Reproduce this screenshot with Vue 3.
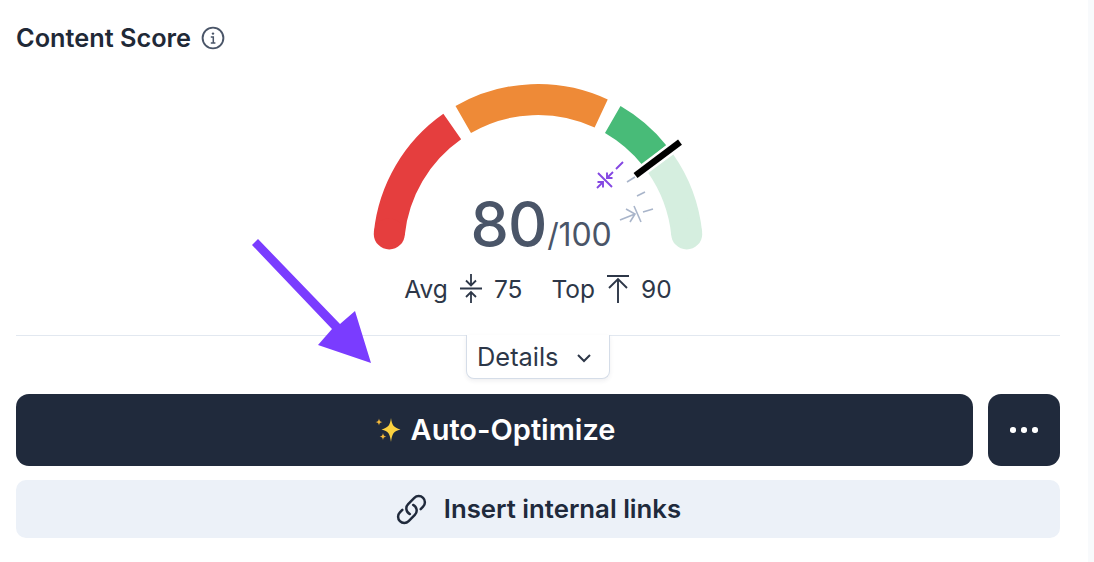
<script setup>
const cx = 538
const cy = 249
const r = 149.5
function point(d) {
  const t = (d * Math.PI) / 180
  return { x: +(cx + r * Math.sin(t)).toFixed(2), y: +(cy - r * Math.cos(t)).toFixed(2) }
}
function arc(a, b) {
  const p = point(a)
  const q = point(b)
  return `M${p.x} ${p.y} A${r} ${r} 0 0 1 ${q.x} ${q.y}`
}
const segments = [
  { d: arc(-84.2, -35), color: '#e53e3e' },
  { d: arc(-30, 25), color: '#ee8a37' },
  { d: arc(30, 51), color: '#48bb78' },
  { d: arc(55, 84.2), color: '#d5eedf' }
]
const capLeft = point(-84.2)
const capRight = point(84.2)
</script>

<template>
  <div class="page">
    <main class="panel">
      <h2 class="title">
        Content Score
        <svg class="info" viewBox="0 0 24 24" aria-hidden="true">
          <circle cx="12" cy="12" r="10.4" fill="none" stroke="#4a5568" stroke-width="1.9" />
          <circle cx="12" cy="7.6" r="1.2" fill="#4a5568" />
          <path d="M9.8 11h2.5v6M9.8 17h4.6" fill="none" stroke="#4a5568" stroke-width="1.5" />
        </svg>
      </h2>

      <div class="gauge">
        <svg class="gauge-svg" viewBox="368 80 340 180" aria-hidden="true">
          <path
            v-for="s in segments"
            :key="s.color"
            :d="s.d"
            fill="none"
            :stroke="s.color"
            stroke-width="31"
          />
          <circle :cx="capLeft.x" :cy="capLeft.y" r="15.5" fill="#e53e3e" />
          <circle :cx="capRight.x" :cy="capRight.y" r="15.5" fill="#d5eedf" />
          <g fill="none" stroke="#a9b5ca" stroke-width="1.6">
            <path d="M627 182l8-5M637 196l8-4M643 212l10-3" />
            <path d="M634 206l7 16M620 220l15-6M626 209l9 5-5 8" />
          </g>
          <g fill="none" stroke="#8447e2" stroke-width="1.9">
            <path d="M623 162l-7 7M598 173l14 14M613 172l-6 6M597 188l6-6M607 172.500v5.500h5.500M597.500 182h5.500v5.500" />
          </g>
          <path d="M635.500 175.500L680 142.100" stroke="#fff" stroke-width="11.500" />
          <path d="M635.500 175.500L680 142.100" stroke="#000" stroke-width="6.500" />
        </svg>
        <div class="score"><span class="score-value">80</span><span class="score-max">/100</span></div>
      </div>

      <div class="stats">
        <span class="stat">
          Avg
          <svg class="stat-icon" viewBox="0 0 28 32" aria-hidden="true">
            <path d="M3 15.500h22M14 1v11M9 7.500l5 5 5-5M14 30V19M9 24l5-5 5 5" fill="none" stroke="#2d3748" stroke-width="1.8" />
          </svg>
          75
        </span>
        <span class="stat">
          Top
          <svg class="stat-icon" viewBox="0 0 28 32" aria-hidden="true">
            <path d="M3 3h22M14 30V6M5 15l9-9 9 9" fill="none" stroke="#2d3748" stroke-width="1.9" />
          </svg>
          90
        </span>
      </div>

      <div class="divider">
        <button class="details" type="button">
          Details
          <svg class="chevron" viewBox="0 0 16 10" aria-hidden="true">
            <path d="M2 2l6 6 6-6" fill="none" stroke="#2d3748" stroke-width="2" />
          </svg>
        </button>
      </div>

      <div class="actions">
        <button class="primary" type="button">
          <svg class="sparkles" viewBox="0 0 28 28" aria-hidden="true">
            <path d="M17 2c1 7 2.500 9.500 9.500 11.500C19.500 15 18 18 17 26c-1-8-2.500-11-9.500-12.500C14.500 11.500 16 9 17 2z" fill="#fbd13f" />
            <path d="M5 2.500c.4 2.500 1 3.100 3.500 3.500C6 6.500 5.400 7.100 5 9.500 4.600 7.100 4 6.500 1.500 6 4 5.600 4.600 5 5 2.500z" fill="#f5b93a" />
            <path d="M9 17c.4 2.500 1 3.100 3.400 3.500C10 21 9.400 21.600 9 24c-.4-2.400-1-3-3.400-3.500C8 20.100 8.600 19.500 9 17z" fill="#f5b93a" />
          </svg>
          Auto-Optimize
        </button>
        <button class="more" type="button" aria-label="More">
          <i></i><i></i><i></i>
        </button>
      </div>

      <button class="links" type="button">
        <svg class="link-icon" viewBox="0 0 24 24" aria-hidden="true">
          <path d="M13.190 8.688a4.500 4.500 0 0 1 1.242 7.244l-4.500 4.500a4.500 4.500 0 0 1-6.364-6.364l1.757-1.757m13.350-.622l1.757-1.757a4.500 4.500 0 0 0-6.364-6.364l-4.500 4.500a4.500 4.500 0 0 0 1.242 7.244" fill="none" stroke="#202a3c" stroke-width="1.800" stroke-linecap="round" stroke-linejoin="round" />
        </svg>
        Insert internal links
      </button>
    </main>
    <aside class="strip"></aside>
    <svg class="arrow" viewBox="0 0 1094 562" aria-hidden="true">
      <polygon points="252,245 258,239 340,324 355,311 371,363 318,345 332,329" fill="#7a3cff" />
    </svg>
  </div>
</template>

<style>
html, body { margin: 0; background: #fff; }
</style>

<style scoped>
.page {
  position: relative;
  width: 1094px;
  height: 562px;
  overflow: hidden;
  display: flex;
  background: #fff;
  font-family: Inter, "Liberation Sans", sans-serif;
  color: #2d3748;
}
.panel {
  width: 1044px;
  margin-left: 16px;
  display: flex;
  flex-direction: column;
}
.strip {
  width: 6px;
  margin-left: 28px;
  background: #f8fafc;
}
.title {
  margin: 0;
  height: 30px;
  margin-top: 23px;
  display: flex;
  align-items: center;
  gap: 10px;
  font-size: 25.300px;
  line-height: 30px;
  font-weight: 600;
  color: #1f2937;
}
.info { width: 24px; height: 24px; }
.gauge {
  position: relative;
  align-self: center;
  width: 340px;
  height: 180px;
  margin-top: 27px;
}
.gauge-svg { display: block; width: 340px; height: 180px; }
.score {
  position: absolute;
  left: 102.500px;
  top: 106px;
  display: flex;
  align-items: baseline;
  color: #4a5568;
  white-space: nowrap;
}
.score-value { font-size: 61px; line-height: 76px; font-weight: 500; letter-spacing: -1px; }
.score-max { font-size: 32px; line-height: 40px; font-weight: 400; margin-left: 1px; letter-spacing: -0.2px; }
.stats {
  height: 36px;
  margin-top: 11px;
  display: flex;
  justify-content: center;
  align-items: center;
  gap: 29px;
  font-size: 24.500px;
  line-height: 36px;
}
.stat { display: flex; align-items: center; gap: 9px; }
.stat-icon { width: 28px; height: 32px; }
.divider {
  margin-top: 28px;
  border-top: 1px solid #e2e8f0;
  display: flex;
  justify-content: center;
}
.details {
  box-sizing: border-box;
  width: 144px;
  height: 44px;
  margin-top: -1px;
  padding: 0 0 0 10px;
  display: flex;
  align-items: center;
  gap: 17px;
  background: #fff;
  border: 1px solid #d5dde8;
  border-top: 0;
  border-radius: 0 0 8px 8px;
  box-shadow: 0 2px 4px rgba(45, 55, 72, 0.08);
  font: 400 25.400px/30px Inter, "Liberation Sans", sans-serif;
  color: #2d3748;
}
.chevron { width: 16px; height: 10px; margin-top: 3px; }
.actions {
  display: flex;
  gap: 15px;
  margin-top: 15px;
}
.primary, .more {
  height: 72px;
  border: 0;
  background: #202a3c;
  color: #fff;
  border-radius: 13px;
}
.primary {
  flex: 1;
  display: flex;
  align-items: center;
  justify-content: center;
  gap: 9px;
  font: 600 29px/34px Inter, "Liberation Sans", sans-serif;
}
.sparkles { width: 28px; height: 28px; }
.more {
  width: 72px;
  padding: 0;
  display: flex;
  align-items: center;
  justify-content: center;
  gap: 5.500px;
}
.more i { width: 5.500px; height: 5.500px; border-radius: 50%; background: #fff; }
.links {
  height: 58px;
  margin-top: 14px;
  border: 0;
  border-radius: 10px;
  background: #ecf1f8;
  display: flex;
  align-items: center;
  justify-content: center;
  gap: 16px;
  font: 600 25.750px/30px Inter, "Liberation Sans", sans-serif;
  color: #202a3c;
}
.link-icon { width: 33px; height: 33px; }
.arrow {
  position: absolute;
  inset: 0;
  width: 1094px;
  height: 562px;
  pointer-events: none;
}
</style>
